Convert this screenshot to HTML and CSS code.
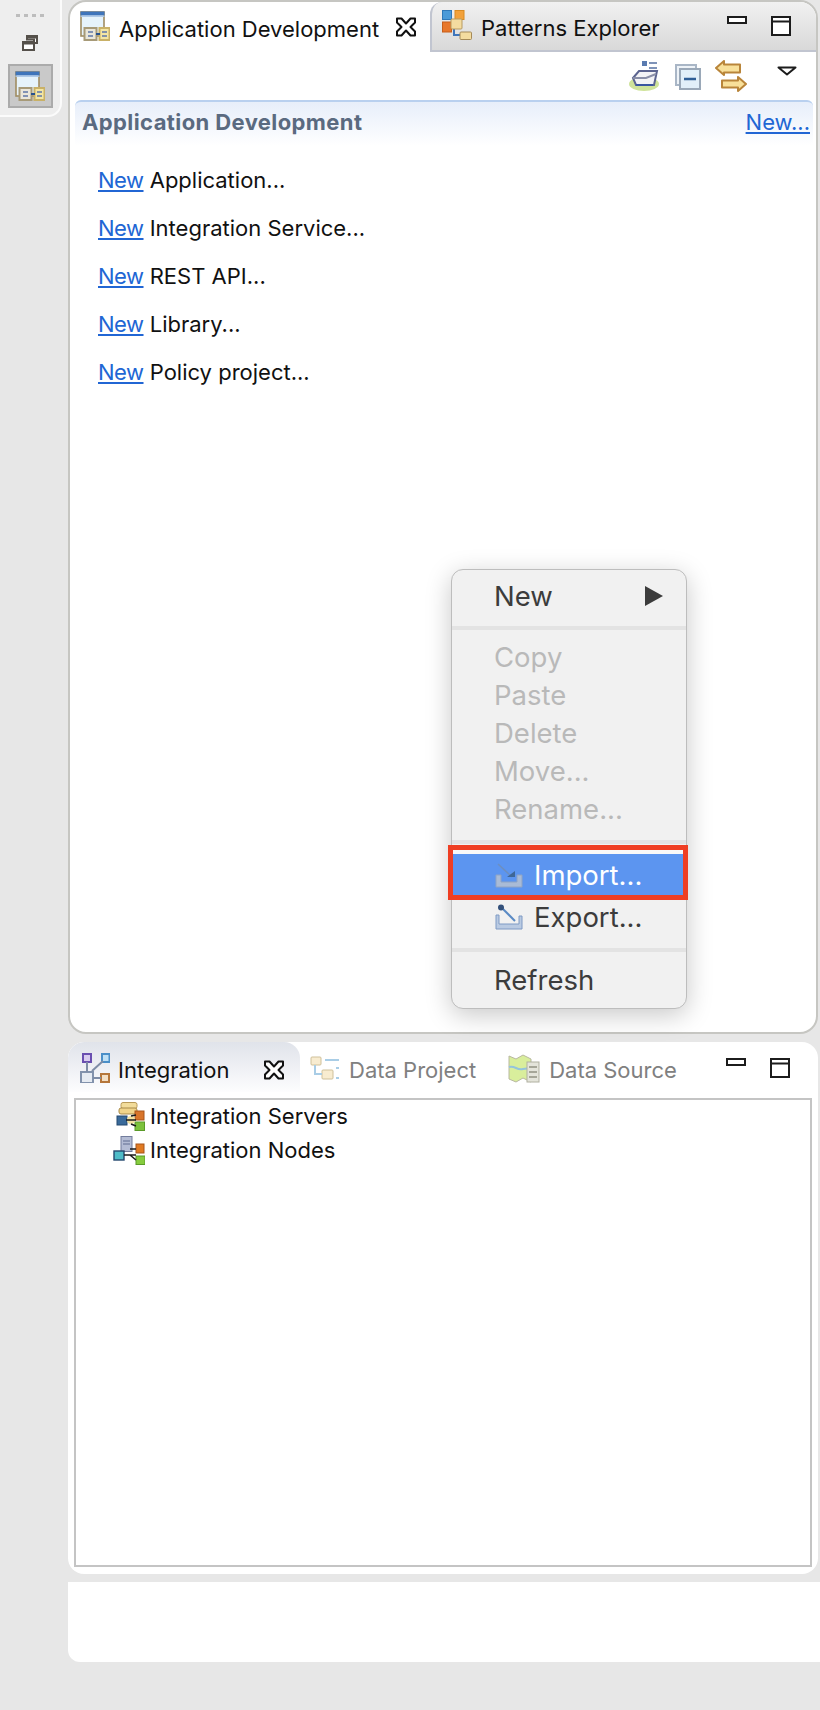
FILE: index.html
```html
<!DOCTYPE html>
<html lang="en">
<head>
  <meta charset="UTF-8" />
  <title>Application Development</title>
  <link rel="stylesheet" href="styles.css">
</head>
<body>
  <svg class="defs" width="0" height="0">
    <symbol id="appdev" viewBox="0 0 30 30">
      <rect x="1" y="1" width="23" height="24" fill="#e6f3fb" stroke="#a08c62" stroke-width="1.6"/>
      <rect x="0.5" y="0.5" width="24" height="4" fill="#3f75bb"/>
      <rect x="0.5" y="4.5" width="24" height="1.4" fill="#a9c6e6"/>
      <rect x="4.5" y="17" width="12" height="12" fill="#e9e6da" stroke="#a79a78" stroke-width="2"/>
      <rect x="19.5" y="17" width="10" height="12" fill="#f3e6a4" stroke="#c9b167" stroke-width="2"/>
      <path d="M16 23h4" stroke="#27528f" stroke-width="2"/>
      <path d="M8 21h5M8 25h5M22 21h5M22 25h5" stroke="#5f77a8" stroke-width="1.6"/>
    </symbol>
    <symbol id="close" viewBox="0 0 22 20">
      <path d="M2 1.500h4.500L11 6.500l4.500-5H20v4L15.500 10l4.500 4.500v4h-4.500L11 13.500l-4.500 5H2v-4L6.500 10 2 5.500z" fill="#fff" stroke="#111" stroke-width="2" stroke-linejoin="round"/>
    </symbol>
    <symbol id="minimize" viewBox="0 0 20 8">
      <rect x="1" y="1" width="18" height="6" fill="#fff" stroke="#1c1c1c" stroke-width="2"/>
    </symbol>
    <symbol id="maximize" viewBox="0 0 20 20">
      <rect x="1" y="1" width="18" height="18" fill="#fff" stroke="#1c1c1c" stroke-width="2"/>
      <path d="M1 5.500h18" stroke="#1c1c1c" stroke-width="2"/>
    </symbol>
  </svg>

  <div class="app">
    <aside class="trim">
      <div class="trim-dots"><i></i><i></i><i></i><i></i></div>
      <svg class="trim-restore" width="16" height="16" viewBox="0 0 16 16">
        <path d="M5 1h10v7h-3V4.500H5z" fill="#fff" stroke="#55504a" stroke-width="2"/>
        <rect x="1" y="7" width="11" height="8" fill="#fff" stroke="#55504a" stroke-width="2"/>
        <path d="M1 8.500h11M5 2.500h10" stroke="#55504a" stroke-width="2"/>
      </svg>
      <div class="trim-btn"><svg width="30" height="30"><use href="#appdev"/></svg></div>
    </aside>

    <main class="stack">
      <section class="panel panel-top">
        <div class="tabs">
          <div class="tab tab-active">
            <svg class="tab-icon" width="30" height="30"><use href="#appdev"/></svg>
            <span class="tab-label">Application Development</span>
            <svg class="tab-close" width="22" height="20"><use href="#close"/></svg>
          </div>
          <div class="tab-rest">
            <div class="tab">
              <svg class="tab-icon" width="30" height="30" viewBox="0 0 30 30">
                <rect x="0.500" y="0.500" width="9" height="9" fill="#4a9ad8" stroke="#2f78b8"/>
                <rect x="13" y="0.500" width="9" height="9" fill="#f2a13a" stroke="#d98a20"/>
                <rect x="0.500" y="12" width="9" height="10" fill="#e8772a" stroke="#c75e1a"/>
                <path d="M12 19v6h9" fill="none" stroke="#3f75bb" stroke-width="2"/>
                <rect x="9" y="9" width="11" height="10" rx="1" fill="#f4dca0" stroke="#b79a60"/>
                <rect x="18" y="22" width="11.500" height="7.500" rx="1" fill="#f4dca0" stroke="#a58a58"/>
              </svg>
              <span class="tab-label">Patterns Explorer</span>
            </div>
            <div class="win-btns">
              <svg width="20" height="8"><use href="#minimize"/></svg>
              <svg width="20" height="20"><use href="#maximize"/></svg>
            </div>
          </div>
        </div>

        <div class="toolbar">
          <svg width="32" height="32" viewBox="0 0 32 32">
            <ellipse cx="15" cy="24" rx="15" ry="7" fill="#cfe39a"/>
            <rect x="13" y="1" width="5" height="5" fill="#5a7bb0"/>
            <path d="M20 3h8M20 8h8M14 11h14" stroke="#7f93b8" stroke-width="2"/>
            <path d="M4 18l6-7h18l-3 14H7z" fill="#f3f3f6" stroke="#5c6490" stroke-width="2"/>
            <path d="M4 18h13l10-4" fill="none" stroke="#8a8fa8" stroke-width="2"/>
            <path d="M7 25h17" stroke="#3a56a0" stroke-width="2"/>
          </svg>
          <svg width="26" height="26" viewBox="0 0 26 26">
            <rect x="1" y="1" width="20" height="20" fill="#eef3f8" stroke="#a9b6c6" stroke-width="2"/>
            <rect x="5" y="5" width="20" height="20" fill="#e2eff9" stroke="#9aa8b8" stroke-width="2"/>
            <path d="M9 15h12" stroke="#2f5e96" stroke-width="2.500"/>
          </svg>
          <svg width="32" height="32" viewBox="0 0 32 32">
            <path d="M1 8l8-7v3.500h16v8H9V15z" fill="#f8e09a" stroke="#b9853a" stroke-width="2" stroke-linejoin="round"/>
            <path d="M31 24l-8-7v3.500H7v7h16V31z" fill="#f8e09a" stroke="#b9853a" stroke-width="2" stroke-linejoin="round"/>
          </svg>
          <svg class="toolbar-menu" width="20" height="10" viewBox="0 0 20 10">
            <path d="M1.500 1.500h17L10 8.500z" fill="#fff" stroke="#1c1c1c" stroke-width="2" stroke-linejoin="round"/>
          </svg>
        </div>

        <div class="form">
          <div class="form-head">
            <span class="form-title">Application Development</span>
            <a class="link" href="#">New...</a>
          </div>
          <ul class="form-list">
            <li><a class="link" href="#">New</a> Application...</li>
            <li><a class="link" href="#">New</a> Integration Service...</li>
            <li><a class="link" href="#">New</a> REST API...</li>
            <li><a class="link" href="#">New</a> Library...</li>
            <li><a class="link" href="#">New</a> Policy project...</li>
          </ul>
        </div>
      </section>

      <section class="panel panel-bottom">
        <div class="tabs tabs-plain">
          <div class="tab tab-soft">
            <svg class="tab-icon" width="30" height="30" viewBox="0 0 30 30">
              <rect x="3" y="1" width="8" height="8" fill="#d9ccef" stroke="#6a4fb0" stroke-width="2"/>
              <rect x="22" y="1" width="7.500" height="8" fill="#bfe0f5" stroke="#4a8fc8" stroke-width="2"/>
              <rect x="1" y="19" width="12" height="11" fill="#e6ebf2" stroke="#8292ac" stroke-width="2"/>
              <rect x="21" y="21" width="8" height="8" fill="#f3dfc4" stroke="#b5763a" stroke-width="2"/>
              <path d="M7 9v10M12 18L23 8M13 25h8" stroke="#7f8da6" stroke-width="2"/>
            </svg>
            <span class="tab-label">Integration</span>
            <svg class="tab-close" width="22" height="20"><use href="#close"/></svg>
          </div>
          <div class="tab tab-off">
            <svg class="tab-icon" width="30" height="30" viewBox="0 0 30 30">
              <rect x="1" y="4" width="10" height="8" rx="1" fill="#f8ecd0" stroke="#cfc09a"/>
              <rect x="12" y="17" width="11" height="9" rx="1" fill="#f8ecd0" stroke="#cfc09a"/>
              <path d="M5 12v9h7M15 7h14M26 15h3M26 25h3" fill="none" stroke="#a9cde6" stroke-width="2"/>
            </svg>
            <span class="tab-label">Data Project</span>
          </div>
          <div class="tab tab-off">
            <svg class="tab-icon" width="32" height="30" viewBox="0 0 32 30">
              <path d="M1 3l7 3 7-4 8 4v23l-8-4-7 4-7-3z" fill="#d9ee9c" stroke="#b8b8a0"/>
              <path d="M1 14c6-2 8 4 14 2l8-1" fill="none" stroke="#94c4dc" stroke-width="2"/>
              <rect x="19" y="9" width="12" height="20" fill="#e4e4da" stroke="#b0b0a0"/>
              <path d="M21 14h8M21 19h8M21 24h8" stroke="#a6a698" stroke-width="2"/>
            </svg>
            <span class="tab-label">Data Source</span>
          </div>
          <div class="win-btns">
            <svg width="20" height="8"><use href="#minimize"/></svg>
            <svg width="20" height="20"><use href="#maximize"/></svg>
          </div>
        </div>

        <div class="tree">
          <div class="tree-row">
            <svg width="29" height="29" viewBox="0 0 29 29">
              <rect x="5" y="0.500" width="16" height="6" rx="2" fill="#f2dc9a" stroke="#b89a58"/>
              <rect x="3" y="6" width="18" height="6" rx="2" fill="#f0d48a" stroke="#a88a48"/>
              <rect x="1" y="14" width="10" height="9" fill="#3a6a9a" stroke="#24486e"/>
              <rect x="19" y="9" width="9" height="9" fill="#d8742a" stroke="#a8551a"/>
              <rect x="19" y="20" width="9.500" height="8.500" fill="#7cc23c" stroke="#5a9a28"/>
              <circle cx="15" cy="18" r="4" fill="#f4e2a0"/>
              <path d="M10 18h10M15 14l5-1M15 22l5 2" stroke="#1c1c1c" stroke-width="1.600"/>
            </svg>
            <span>Integration Servers</span>
          </div>
          <div class="tree-row">
            <svg width="32" height="29" viewBox="0 0 32 29">
              <rect x="8" y="0.500" width="11" height="15" fill="#b4bcd4" stroke="#727c9c"/>
              <path d="M10 5h7M10 8h7" stroke="#7c86a6" stroke-width="1.500"/>
              <rect x="1" y="15" width="10" height="9" fill="#4ebcc8" stroke="#24486e" stroke-width="1.400"/>
              <rect x="23" y="8" width="8" height="9" fill="#e07a22" stroke="#a8551a"/>
              <rect x="23" y="20" width="9" height="8.500" fill="#86cc3e" stroke="#5a9a28"/>
              <path d="M11 19h12M17 13h6M17 19l6 5" stroke="#1c1c1c" stroke-width="1.600" fill="none"/>
            </svg>
            <span>Integration Nodes</span>
          </div>
        </div>
      </section>

      <div class="status"></div>
    </main>

    <div class="menu">
      <div class="menu-row menu-first"><span>New</span><i class="menu-arrow"></i></div>
      <hr class="menu-sep">
      <div class="menu-row menu-off">Copy</div>
      <div class="menu-row menu-off">Paste</div>
      <div class="menu-row menu-off">Delete</div>
      <div class="menu-row menu-off">Move...</div>
      <div class="menu-row menu-off">Rename...</div>
      <hr class="menu-sep menu-sep-2">
      <div class="menu-row menu-icon menu-hot">
        <svg width="30" height="26" viewBox="0 0 30 26">
          <path d="M4 2l14 13" stroke="#6d8fc0" stroke-width="1.500"/>
          <path d="M13 15h8v-6z" fill="#3f6796"/>
          <path d="M2 13h5v7h16v-7h5v12H2z" fill="#a9bbd6" stroke="#8ea3c4"/>
        </svg>
        <span>Import...</span>
      </div>
      <div class="menu-row menu-icon menu-after">
        <svg width="30" height="26" viewBox="0 0 30 26">
          <path d="M8 4l13 13" stroke="#5a8ac4" stroke-width="2"/>
          <circle cx="7" cy="3.500" r="3" fill="#33507a"/>
          <path d="M2 11h3v9h20v-8h3v13H2z" fill="#b9cae2" stroke="#7f9ac4"/>
        </svg>
        <span>Export...</span>
      </div>
      <hr class="menu-sep menu-sep-3">
      <div class="menu-row">Refresh</div>
    </div>
  </div>
</body>
</html>
```

FILE: styles.css
```css
body {
  margin: 0;
  background: #e7e7e7;
  font-family: "Inter", "Liberation Sans", sans-serif;
  font-size: 22px;
  color: #111;
}
.defs {
  position: absolute;
}
.app {
  position: relative;
  display: flex;
  align-items: flex-start;
  width: 820px;
  height: 1710px;
  overflow: hidden;
}

/* left trim */
.trim {
  box-sizing: border-box;
  width: 62px;
  height: 117px;
  flex: none;
  padding: 14px 8px 0 8px;
  margin-right: 6px;
  background: #eeeeee;
  border: 2px solid #fbfbfb;
  border-left: none;
  border-top: none;
  border-bottom-right-radius: 14px;
  display: flex;
  flex-direction: column;
  align-items: center;
}
.trim-dots {
  display: flex;
  gap: 4px;
}
.trim-dots i {
  width: 4px;
  height: 3px;
  background: #bdbdbd;
}
.trim-restore {
  margin-top: 18px;
}
.trim-btn {
  box-sizing: border-box;
  width: 45px;
  height: 44px;
  margin-top: 13px;
  background: #c9c9c9;
  border: 2px solid #ababab;
  display: flex;
  align-items: center;
  justify-content: center;
}

/* panels */
.stack {
  width: 752px;
  flex: none;
}
.panel {
  box-sizing: border-box;
  width: 750px;
  background: #fff;
}
.panel-top {
  height: 1034px;
  border: 2px solid #c6c6c2;
  border-radius: 18px;
  overflow: hidden;
}
.panel-bottom {
  height: 532px;
  margin-top: 8px;
  border-radius: 16px;
  overflow: hidden;
}
.status {
  height: 80px;
  margin-top: 8px;
  background: #fff;
  border-bottom-left-radius: 12px;
}

/* tabs */
.tabs {
  display: flex;
  height: 50px;
}
.tab {
  display: flex;
  align-items: center;
}
.tab-active {
  box-sizing: border-box;
  width: 360px;
  padding-left: 10px;
}
.tab-icon {
  margin-top: -2px;
  flex: none;
}
.tab-label {
  margin: 3px 0 0 9px;
  white-space: nowrap;
}
.tab-active .tab-close {
  margin-left: 16px;
}
.tab-rest {
  flex: 1;
  display: flex;
  justify-content: space-between;
  background: linear-gradient(#f1f1f1, #d9d9d9);
  border-bottom: 2px solid #c1c5d0;
  border-left: 2px solid #c1c5d0;
  border-top-left-radius: 12px;
  padding-left: 10px;
}
.win-btns {
  display: flex;
  gap: 24px;
  align-items: flex-start;
  padding: 14px 25px 0 0;
}
.tab-soft {
  box-sizing: border-box;
  width: 232px;
  padding-left: 12px;
  background: linear-gradient(#e0e3ea, #fdfdfe);
  border-radius: 16px 16px 0 0;
}
.tab-soft .tab-icon,
.tab-off .tab-icon {
  margin-top: 1px;
}
.tab-soft .tab-label,
.tab-off .tab-label {
  margin-top: 5px;
}
.tab-soft .tab-label {
  margin-left: 8px;
}
.tab-soft .tab-close {
  margin: 5px 0 0 33px;
}
.tab-off {
  margin-left: 10px;
  color: #808080;
}
.tab-off + .tab-off {
  margin-left: 32px;
}
.tabs-plain .win-btns {
  margin-left: auto;
  padding-top: 16px;
  padding-right: 28px;
}

/* toolbar */
.toolbar {
  display: flex;
  align-items: flex-start;
  justify-content: flex-end;
  box-sizing: border-box;
  height: 48px;
  padding: 8px 19px 0 0;
}
.toolbar svg {
  margin-left: 14px;
}
.toolbar svg:nth-child(2) {
  margin-top: 4px;
}
.toolbar .toolbar-menu {
  margin-left: 30px;
  margin-top: 6px;
}

/* form */
.form {
  margin: 0 3px 0 5px;
}
.form-head {
  box-sizing: border-box;
  height: 46px;
  display: flex;
  justify-content: space-between;
  align-items: flex-start;
  padding: 7px 3px 0 7px;
  border-top: 2px solid #b9d0ef;
  border-radius: 6px 6px 0 0;
  background: linear-gradient(#e7eefa, #ffffff);
}
.form-title {
  font-weight: 700;
  letter-spacing: 0.4px;
  color: #5a6a80;
}
.link {
  color: #2166d4;
  text-decoration: underline;
}
.form-list {
  list-style: none;
  margin: 0;
  padding: 19px 0 0 23px;
}
.form-list li {
  height: 48px;
  line-height: 30px;
}
.form-list .link {
  letter-spacing: -0.5px;
}

/* tree */
.tree {
  box-sizing: border-box;
  height: 469px;
  margin: 6px 6px 0 6px;
  border: 2px solid #c4c4c4;
}
.tree-row {
  display: flex;
  align-items: center;
  height: 32px;
  padding-left: 40px;
}
.tree-row span {
  margin-left: 5px;
}
.tree-row + .tree-row {
  padding-left: 37px;
  margin-top: 2px;
}

/* context menu */
.menu {
  position: absolute;
  left: 451px;
  top: 569px;
  box-sizing: border-box;
  width: 236px;
  height: 440px;
  background: #f1f1f1;
  border: 1px solid #bdbdbd;
  border-radius: 12px;
  box-shadow: 0 6px 26px rgba(0, 0, 0, 0.22);
  font-size: 27.5px;
  color: #3c3c3c;
}
.menu-row {
  display: flex;
  align-items: center;
  height: 38px;
  padding-left: 42px;
  position: relative;
  white-space: nowrap;
}
.menu-first {
  height: 52px;
  justify-content: space-between;
  padding-right: 23px;
}
.menu-arrow {
  width: 0;
  height: 0;
  border-left: 18px solid #3c3c3c;
  border-top: 10px solid transparent;
  border-bottom: 10px solid transparent;
}
.menu-sep {
  height: 4px;
  margin: 4px 0 8px 0;
  border: none;
  background: #e3e3e3;
}
.menu-sep-2 {
  margin: 12px 0 10px 0;
}
.menu-sep-3 {
  margin: 12px 0 9px 0;
}
.menu-off {
  color: #b9b9b9;
}
.menu-icon svg {
  flex: none;
}
.menu-icon span {
  margin-left: 10px;
}
.menu-hot {
  height: 41px;
  background: #5c95f0;
  color: #fff;
  box-shadow: 0 -4px 0 #f8f8f8;
}
.menu-hot::after {
  content: "";
  position: absolute;
  left: -4px;
  right: -2px;
  top: -9px;
  bottom: -5px;
  border: 5px solid #ef3e23;
}
.menu-after {
  margin-top: 3px;
}
```
